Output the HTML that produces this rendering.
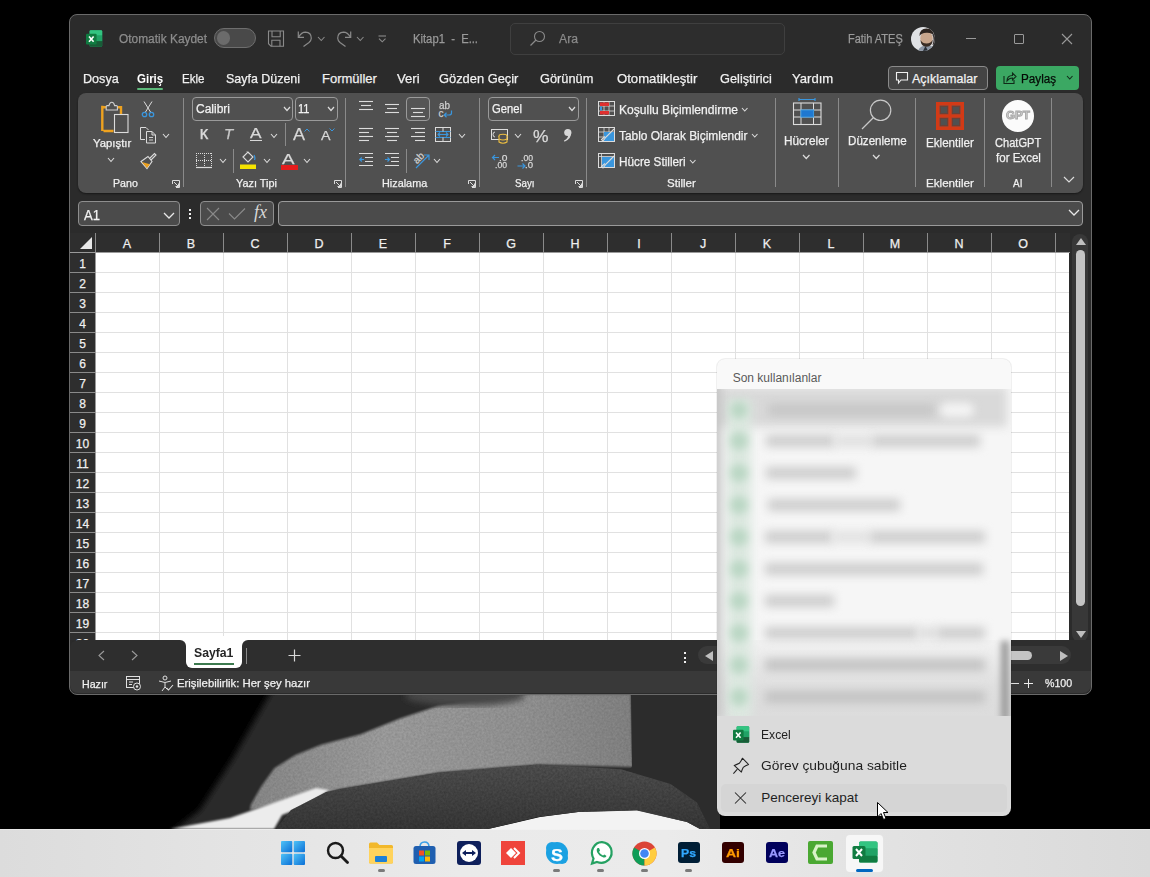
<!DOCTYPE html>
<html><head><meta charset="utf-8"><style>
html,body{margin:0;padding:0;}
body{width:1150px;height:877px;overflow:hidden;position:relative;background:#000;font-family:"Liberation Sans",sans-serif;}
.t{position:absolute;white-space:pre;transform-origin:0 0;-webkit-text-stroke:0.25px currentColor;}
.r{position:absolute;}
.s{position:absolute;overflow:visible;}
</style></head><body>
<svg class="s" style="left:0px;top:694px;" width="720" height="135" viewBox="0 0 720 135">
<defs>
 <linearGradient id="skin" x1="0" y1="0" x2="1" y2="0">
  <stop offset="0" stop-color="#909090"/><stop offset="0.35" stop-color="#a6a6a6"/><stop offset="0.7" stop-color="#9c9c9c"/><stop offset="1" stop-color="#8a8a8a"/>
 </linearGradient>
 <linearGradient id="collar" x1="0" y1="0" x2="0" y2="1">
  <stop offset="0" stop-color="#585858"/><stop offset="1" stop-color="#3e3e3e"/>
 </linearGradient>
 <filter id="bl1"><feGaussianBlur stdDeviation="1"/></filter>
 <filter id="bl3"><feGaussianBlur stdDeviation="3"/></filter>
 <filter id="bl8" x="-20%" y="-50%" width="140%" height="200%"><feGaussianBlur stdDeviation="8"/></filter>
 <filter id="noise" x="0" y="0" width="100%" height="100%">
  <feTurbulence type="fractalNoise" baseFrequency="0.45" numOctaves="2" seed="5"/>
  <feColorMatrix type="matrix" values="0 0 0 0 0  0 0 0 0 0  0 0 0 0 0  0 0 0 0.5 0"/>
  <feComposite in2="SourceGraphic" operator="in"/>
 </filter>
</defs>
<rect x="0" y="0" width="720" height="140" fill="#000"/>
<!-- neck shadow gray -->
<polygon points="272.0,-4.0 640.0,-4.0 640.0,106.0 300.0,138.0 172.0,138.0 200.0,116.0 232.0,66.0" fill="#2a2a2a" filter="url(#bl3)"/>
<!-- skin -->
<path id="skinp" d="M530.0 0.0 L631.0 0.0 L633.0 73.0 L540.0 70.4 L439.0 78.6 L340.0 95.0 L300.0 106.0 L250.0 116.0 L250.9 110.8 L261.3 92.5 L274.4 74.3 L295.2 61.2 L321.3 50.8 L360.4 40.4 L399.6 24.7 L438.7 11.7 L500.0 3.0 Z" fill="url(#skin)" filter="url(#bl1)"/>
<path d="M530.0 0.0 L631.0 0.0 L633.0 73.0 L540.0 70.4 L439.0 78.6 L340.0 95.0 L300.0 106.0 L250.0 116.0 L250.9 110.8 L261.3 92.5 L274.4 74.3 L295.2 61.2 L321.3 50.8 L360.4 40.4 L399.6 24.7 L438.7 11.7 L500.0 3.0 Z" fill="#fff" filter="url(#noise)" opacity="0.35"/>
<ellipse cx="465" cy="2" rx="60" ry="10" fill="#474747" filter="url(#bl3)"/>
<!-- right neck shadow -->
<polygon points="631.0,0.0 720.0,0.0 720.0,136.0 560.0,136.0 600.0,96.0 632.0,73.0" fill="#2c2c2c"/>
<!-- white shirt left -->
<polygon points="170.0,135.0 230.0,124.0 282.0,106.0 316.0,94.0 329.0,96.0 308.0,111.0 282.0,121.0 274.0,135.0" fill="#ececec" filter="url(#bl1)"/>
<!-- white shirt right -->
<polygon points="488.0,135.0 540.0,123.0 578.0,118.0 637.0,116.0 687.0,128.0 700.0,135.0" fill="#f3f3f3"/>
<!-- collar -->
<polygon id="col" points="276.0,135.0 291.0,116.0 326.0,98.0 340.0,95.0 439.0,78.6 538.0,70.4 621.0,75.3 670.5,90.0 697.0,108.4 710.0,135.0 700.0,135.0 687.0,128.0 637.0,116.6 578.0,118.0 538.0,123.0 488.0,135.0" fill="url(#collar)"/>
<polygon points="276.0,135.0 291.0,116.0 326.0,98.0 340.0,95.0 439.0,78.6 538.0,70.4 621.0,75.3 670.5,90.0 697.0,108.4 710.0,135.0 700.0,135.0 687.0,128.0 637.0,116.6 578.0,118.0 538.0,123.0 488.0,135.0" fill="#000" filter="url(#noise)" opacity="0.6"/>
</svg>
<div class="r" style="left:69px;top:14px;width:1021px;height:679px;background:#2b2b2b;border:1px solid #6a6a6a;border-radius:8px;"></div>
<svg class="s" style="left:85.6px;top:30.2px;" width="17" height="17" viewBox="0 0 17 17">
<rect x="3.6" y="0.2" width="12.6" height="16.5" rx="1.2" fill="#21a366"/>
<path d="M3.6 1.4 Q3.6 0.2 4.8 0.2 H15 Q16.2 0.2 16.2 1.4 V5.6 H3.6 Z" fill="#33c481"/>
<path d="M3.6 11.1 H16.2 V15.5 Q16.2 16.7 15 16.7 H4.8 Q3.6 16.7 3.6 15.5 Z" fill="#185c37"/>
<rect x="3.6" y="5.6" width="12.6" height="5.5" fill="#21a366"/>
<rect x="0" y="3.8" width="10.6" height="10.6" rx="1" fill="#107c41"/>
<path d="M3 6.5 L7.6 11.7 M7.6 6.5 L3 11.7" stroke="#fff" stroke-width="1.6"/>
</svg>
<div class="t" style="left:118.70px;top:32.62px;font-size:12.5px;line-height:12.5px;color:#8d8d8d;transform:scaleX(0.9524);">Otomatik Kaydet</div>
<div class="r" style="left:214px;top:28px;width:40px;height:18px;border:1px solid #6e6e6e;border-radius:10px;background:#494949;"></div>
<div class="r" style="left:216.7px;top:31px;width:13.6px;height:13.6px;border-radius:50%;background:#6b6b6b;"></div>
<svg class="s" style="left:268px;top:30px;" width="17" height="17" viewBox="0 0 17 17"><path d="M0.5 1 H15.5 V16.2 H3 L0.5 13.7 Z" fill="none" stroke="#8a8a8a" stroke-width="1.1"/><path d="M4 1 V6.8 H12.2 V1 M3.8 16.2 V10.2 H12 V16.2" fill="none" stroke="#8a8a8a" stroke-width="1.1"/></svg>
<svg class="s" style="left:297px;top:30px;" width="16" height="18" viewBox="0 0 16 18"><path d="M1.3 1.5 V7.3 H7" fill="none" stroke="#8a8a8a" stroke-width="1.2"/><path d="M1.5 7.2 Q4.5 2.2 8.5 2.2 Q14.3 2.6 14.3 8.2 Q14.2 10.5 12 12.5 L6.5 16.5" fill="none" stroke="#8a8a8a" stroke-width="1.2"/></svg>
<svg class="s" style="left:317px;top:36px;" width="8.5" height="5.5" viewBox="0 0 8.5 5.5"><path d="M1 1 L4.25 4.5 L7.5 1" fill="none" stroke="#8a8a8a" stroke-width="1.1"/></svg>
<svg class="s" style="left:336px;top:30px;" width="16" height="18" viewBox="0 0 16 18"><path d="M14.7 1.5 V7.3 H9" fill="none" stroke="#8a8a8a" stroke-width="1.2"/><path d="M14.5 7.2 Q11.5 2.2 7.5 2.2 Q1.7 2.6 1.7 8.2 Q1.8 10.5 4 12.5 L9.5 16.5" fill="none" stroke="#8a8a8a" stroke-width="1.2"/></svg>
<svg class="s" style="left:356.3px;top:36px;" width="8.5" height="5.5" viewBox="0 0 8.5 5.5"><path d="M1 1 L4.25 4.5 L7.5 1" fill="none" stroke="#8a8a8a" stroke-width="1.1"/></svg>
<svg class="s" style="left:378px;top:35px;" width="9" height="8" viewBox="0 0 9 8"><path d="M0.5 1 H8" stroke="#8a8a8a" stroke-width="1.1"/><path d="M1 3.6 L4.25 6.8 L7.5 3.6" fill="none" stroke="#8a8a8a" stroke-width="1.1"/></svg>
<div class="t" style="left:412.70px;top:33.42px;font-size:12.5px;line-height:12.5px;color:#9a9a9a;transform:scaleX(0.8996);">Kitap1  -  E...</div>
<div class="r" style="left:510px;top:23px;width:273px;height:30px;border:1px solid #3f3f3f;border-radius:5px;background:#2d2d2d;"></div>
<svg class="s" style="left:529px;top:30px;" width="17" height="17" viewBox="0 0 17 17"><circle cx="10.5" cy="6.5" r="5" fill="none" stroke="#8a8a8a" stroke-width="1.1"/><path d="M7 10 L1.5 15.5" stroke="#8a8a8a" stroke-width="1.2"/></svg>
<div class="t" style="left:559.30px;top:33.12px;font-size:12.5px;line-height:12.5px;color:#8a8a8a;transform:scaleX(0.9767);">Ara</div>
<div class="t" style="left:847.60px;top:33.42px;font-size:12.5px;line-height:12.5px;color:#9a9a9a;transform:scaleX(0.8781);">Fatih ATEŞ</div>
<svg class="s" style="left:911px;top:27px;" width="24" height="24" viewBox="0 0 24 24"><defs><clipPath id="av"><circle cx="12" cy="12" r="12"/></clipPath></defs>
<g clip-path="url(#av)"><rect width="24" height="24" fill="#dfe1e4"/>
<path d="M7 24 Q9 18.5 15 18.5 Q22 18.5 24 21 V24 Z" fill="#8c96a4"/>
<path d="M12 24 L14.5 19 L17 24 Z" fill="#2a3038"/>
<ellipse cx="15.5" cy="11.5" rx="6.2" ry="7.5" fill="#c9a68c"/>
<path d="M8.5 9 Q8.5 1.5 15.5 1.5 Q23 1.5 23 9.5 Q21.5 5.5 15.5 5.8 Q10 6 8.5 9 Z" fill="#2e2520"/>
<path d="M9.5 13 Q9.8 19.5 15.5 19.8 Q21.5 19.5 21.8 12.5 Q20 16.5 15.5 16.5 Q11.5 16.5 9.5 13 Z" fill="#3a2d25"/>
<path d="M21.5 8 Q23.5 12 21.5 18 L24 18 V6 Z" fill="#3a3535"/>
</g></svg>
<div class="r" style="left:966px;top:38px;width:10px;height:1px;background:#9a9a9a;"></div>
<div class="r" style="left:1014px;top:34px;width:8px;height:8px;border:1px solid #9a9a9a;border-radius:1px;"></div>
<svg class="s" style="left:1061px;top:33px;" width="12" height="12" viewBox="0 0 12 12"><path d="M1 1 L11 11 M11 1 L1 11" stroke="#9a9a9a" stroke-width="1.1"/></svg>
<div class="t" style="left:83.20px;top:71.90px;font-size:13px;line-height:13px;color:#f0f0f0;transform:scaleX(0.9688);">Dosya</div>
<div class="t" style="left:182.40px;top:71.90px;font-size:13px;line-height:13px;color:#f0f0f0;transform:scaleX(0.8857);">Ekle</div>
<div class="t" style="left:226.00px;top:71.90px;font-size:13px;line-height:13px;color:#f0f0f0;transform:scaleX(0.9570);">Sayfa Düzeni</div>
<div class="t" style="left:322.00px;top:71.90px;font-size:13px;line-height:13px;color:#f0f0f0;">Formüller</div>
<div class="t" style="left:397.00px;top:71.90px;font-size:13px;line-height:13px;color:#f0f0f0;transform:scaleX(1.0088);">Veri</div>
<div class="t" style="left:439.00px;top:71.90px;font-size:13px;line-height:13px;color:#f0f0f0;transform:scaleX(0.9900);">Gözden Geçir</div>
<div class="t" style="left:540.30px;top:71.90px;font-size:13px;line-height:13px;color:#f0f0f0;transform:scaleX(0.9835);">Görünüm</div>
<div class="t" style="left:617.40px;top:71.90px;font-size:13px;line-height:13px;color:#f0f0f0;transform:scaleX(1.0106);">Otomatikleştir</div>
<div class="t" style="left:720.40px;top:71.90px;font-size:13px;line-height:13px;color:#f0f0f0;transform:scaleX(0.9825);">Geliştirici</div>
<div class="t" style="left:791.60px;top:71.90px;font-size:13px;line-height:13px;color:#f0f0f0;transform:scaleX(1.0064);">Yardım</div>
<div class="t" style="left:137.00px;top:71.90px;font-size:13px;line-height:13px;color:#ffffff;font-weight:700;transform:scaleX(0.8844);-webkit-text-stroke:0;">Giriş</div>
<div class="r" style="left:137px;top:88px;width:26px;height:2px;border-radius:1px;background:#5cb97a;"></div>
<div class="r" style="left:888px;top:66px;width:98px;height:22px;border:1px solid #8a8a8a;border-radius:4px;background:#444;"></div>
<svg class="s" style="left:895px;top:71px;" width="14" height="14" viewBox="0 0 14 14"><path d="M1.5 1.5 H12.5 V9 H6 L3.5 12 V9 H1.5 Z" fill="none" stroke="#f0f0f0" stroke-width="1.1"/></svg>
<div class="t" style="left:912.00px;top:72.62px;font-size:12.5px;line-height:12.5px;color:#f2f2f2;">Açıklamalar</div>
<div class="r" style="left:996px;top:66px;width:83px;height:24px;border-radius:4px;background:#3ba863;"></div>
<svg class="s" style="left:1002px;top:70px;" width="15" height="15" viewBox="0 0 15 15"><path d="M2 6 V13.5 H12 V10" fill="none" stroke="#102a18" stroke-width="1.1"/><path d="M5 11 Q5 5.5 10.5 5.5 V3 L14 6.5 L10.5 10 V8 Q7 8 5 11 Z" fill="none" stroke="#102a18" stroke-width="1.1"/></svg>
<div class="t" style="left:1020.60px;top:72.62px;font-size:12.5px;line-height:12.5px;color:#050a06;transform:scaleX(0.9355);">Paylaş</div>
<svg class="s" style="left:1066px;top:75px;" width="7.5" height="5" viewBox="0 0 7.5 5"><path d="M1 1 L3.75 4 L6.5 1" fill="none" stroke="#102a18" stroke-width="1.1"/></svg>
<div class="r" style="left:78px;top:93px;width:1005px;height:100px;border-radius:8px;background:#505050;box-shadow:0 1px 2px rgba(0,0,0,0.45);"></div>
<div class="r" style="left:183px;top:98px;width:1px;height:89px;background:#8a8a8a;"></div>
<div class="r" style="left:345px;top:98px;width:1px;height:89px;background:#8a8a8a;"></div>
<div class="r" style="left:479px;top:98px;width:1px;height:89px;background:#8a8a8a;"></div>
<div class="r" style="left:586px;top:98px;width:1px;height:89px;background:#8a8a8a;"></div>
<div class="r" style="left:775px;top:98px;width:1px;height:89px;background:#8a8a8a;"></div>
<div class="r" style="left:838px;top:98px;width:1px;height:89px;background:#8a8a8a;"></div>
<div class="r" style="left:915px;top:98px;width:1px;height:89px;background:#8a8a8a;"></div>
<div class="r" style="left:984px;top:98px;width:1px;height:89px;background:#8a8a8a;"></div>
<div class="r" style="left:1051px;top:98px;width:1px;height:89px;background:#8a8a8a;"></div>
<div class="t" style="left:112.50px;top:177.69px;font-size:11px;line-height:11px;color:#f0f0f0;transform:scaleX(0.9653);">Pano</div>
<div class="t" style="left:236.00px;top:177.69px;font-size:11px;line-height:11px;color:#f0f0f0;transform:scaleX(0.9887);">Yazı Tipi</div>
<div class="t" style="left:382.40px;top:177.69px;font-size:11px;line-height:11px;color:#f0f0f0;transform:scaleX(0.9858);">Hizalama</div>
<div class="t" style="left:515.00px;top:177.69px;font-size:11px;line-height:11px;color:#f0f0f0;transform:scaleX(0.8859);">Sayı</div>
<div class="t" style="left:667.20px;top:177.69px;font-size:11px;line-height:11px;color:#f0f0f0;transform:scaleX(1.0470);">Stiller</div>
<div class="t" style="left:926.40px;top:177.69px;font-size:11px;line-height:11px;color:#f0f0f0;transform:scaleX(1.0565);">Eklentiler</div>
<div class="t" style="left:1013.00px;top:177.69px;font-size:11px;line-height:11px;color:#f0f0f0;transform:scaleX(0.9044);">AI</div>
<svg class="s" style="left:172px;top:180px;" width="8" height="8" viewBox="0 0 8 8"><path d="M0.5 4 V0.5 H7.5 V7.5 H4" fill="none" stroke="#dcdcdc" stroke-width="1"/><path d="M2 2 L6.5 6.5 M6.5 3.5 V6.5 H3.5" fill="none" stroke="#dcdcdc" stroke-width="1"/></svg>
<svg class="s" style="left:334px;top:180px;" width="8" height="8" viewBox="0 0 8 8"><path d="M0.5 4 V0.5 H7.5 V7.5 H4" fill="none" stroke="#dcdcdc" stroke-width="1"/><path d="M2 2 L6.5 6.5 M6.5 3.5 V6.5 H3.5" fill="none" stroke="#dcdcdc" stroke-width="1"/></svg>
<svg class="s" style="left:468px;top:180px;" width="8" height="8" viewBox="0 0 8 8"><path d="M0.5 4 V0.5 H7.5 V7.5 H4" fill="none" stroke="#dcdcdc" stroke-width="1"/><path d="M2 2 L6.5 6.5 M6.5 3.5 V6.5 H3.5" fill="none" stroke="#dcdcdc" stroke-width="1"/></svg>
<svg class="s" style="left:575px;top:180px;" width="8" height="8" viewBox="0 0 8 8"><path d="M0.5 4 V0.5 H7.5 V7.5 H4" fill="none" stroke="#dcdcdc" stroke-width="1"/><path d="M2 2 L6.5 6.5 M6.5 3.5 V6.5 H3.5" fill="none" stroke="#dcdcdc" stroke-width="1"/></svg>
<svg class="s" style="left:100px;top:101px;" width="30" height="33" viewBox="0 0 30 33">
<path d="M3.5 30 H13.5 M2.3 4.8 V30 M2.3 6.2 H6.5 M17 6.2 H21 V13" fill="none" stroke="#eea21f" stroke-width="2.4"/>
<path d="M6.2 9 V5.6 Q6.2 4.6 7.2 4.6 H9 Q9.6 1.2 11.8 1.2 Q14 1.2 14.6 4.6 H16.4 Q17.4 4.6 17.4 5.6 V9 Z" fill="#505050" stroke="#cfcfcf" stroke-width="1.1"/>
<rect x="14.5" y="13.5" width="13.5" height="18" fill="#505050" stroke="#dcdcdc" stroke-width="1.1"/>
</svg>
<div class="t" style="left:92.70px;top:138.49px;font-size:11px;line-height:11px;color:#f0f0f0;transform:scaleX(1.0327);">Yapıştır</div>
<svg class="s" style="left:107px;top:157px;" width="8" height="5.5" viewBox="0 0 8 5.5"><path d="M1 1 L4.0 4.5 L7 1" fill="none" stroke="#dcdcdc" stroke-width="1.1"/></svg>
<svg class="s" style="left:141px;top:101px;" width="14" height="17" viewBox="0 0 14 17"><path d="M3 0.5 L9.5 11 M11 0.5 L4.5 11" stroke="#dcdcdc" stroke-width="1"/><circle cx="3.5" cy="13.5" r="2.2" fill="none" stroke="#3a96dd" stroke-width="1.3"/><circle cx="10.5" cy="13.5" r="2.2" fill="none" stroke="#3a96dd" stroke-width="1.3"/></svg>
<svg class="s" style="left:140px;top:127px;" width="17" height="17" viewBox="0 0 17 17"><path d="M5 12.5 H0.5 V0.5 H6 L8.5 3" fill="none" stroke="#dcdcdc" stroke-width="1"/><path d="M6.5 4.5 H12 L15.5 8 V16 H6.5 Z M12 4.5 V8 H15.5" fill="none" stroke="#dcdcdc" stroke-width="1"/><path d="M9 10.5 H13 M9 13 H13" stroke="#dcdcdc" stroke-width="0.9"/></svg>
<svg class="s" style="left:162px;top:133px;" width="8" height="5.5" viewBox="0 0 8 5.5"><path d="M1 1 L4.0 4.5 L7 1" fill="none" stroke="#dcdcdc" stroke-width="1.1"/></svg>
<svg class="s" style="left:139px;top:152px;" width="18" height="18" viewBox="0 0 18 18"><path d="M2 9.5 L9 4.5 L13 9.5 L8 16.5 Z" fill="none" stroke="#dcdcdc" stroke-width="1.1"/><path d="M2.8 10 L8 16 L10.8 12.2 Z" fill="#eea21f"/><path d="M10.5 6.5 L15.5 1.5 L17 3 L12 8" fill="none" stroke="#dcdcdc" stroke-width="1.1"/></svg>
<div class="r" style="left:192px;top:97px;width:99px;height:22px;border:1px solid #9a9a9a;border-radius:4px;"></div>
<div class="r" style="left:295px;top:97px;width:41px;height:22px;border:1px solid #9a9a9a;border-radius:4px;"></div>
<div class="t" style="left:195.50px;top:103.22px;font-size:12.5px;line-height:12.5px;color:#f2f2f2;transform:scaleX(0.9597);">Calibri</div>
<div class="t" style="left:298.30px;top:103.22px;font-size:12.5px;line-height:12.5px;color:#f2f2f2;transform:scaleX(0.8862);">11</div>
<svg class="s" style="left:282.5px;top:106px;" width="8" height="5.5" viewBox="0 0 8 5.5"><path d="M1 1 L4.0 4.5 L7 1" fill="none" stroke="#dcdcdc" stroke-width="1.2"/></svg>
<svg class="s" style="left:327px;top:106px;" width="8" height="5.5" viewBox="0 0 8 5.5"><path d="M1 1 L4.0 4.5 L7 1" fill="none" stroke="#dcdcdc" stroke-width="1.2"/></svg>
<div class="t" style="left:199.50px;top:126.95px;font-size:14px;line-height:14px;color:#d8d8d8;font-weight:700;transform:scaleX(0.8407);">K</div>
<div class="t" style="left:224.30px;top:126.95px;font-size:14px;line-height:14px;color:#c8c8c8;transform:scaleX(1.0758);font-style:italic;">T</div>
<div class="t" style="left:250.30px;top:126.15px;font-size:14px;line-height:14px;color:#d8d8d8;transform:scaleX(1.2315);">A</div>
<div class="r" style="left:250px;top:140px;width:12px;height:1px;background:#d8d8d8;"></div>
<svg class="s" style="left:270px;top:133px;" width="8" height="5.5" viewBox="0 0 8 5.5"><path d="M1 1 L4.0 4.5 L7 1" fill="none" stroke="#dcdcdc" stroke-width="1.1"/></svg>
<div class="r" style="left:285px;top:123px;width:1px;height:23px;background:#8a8a8a;"></div>
<div class="t" style="left:293.00px;top:125.61px;font-size:17px;line-height:17px;color:#d8d8d8;transform:scaleX(1.0582);">A</div>
<svg class="s" style="left:304px;top:128px;" width="6" height="4" viewBox="0 0 6 4"><path d="M0.5 3.5 L3 1 L5.5 3.5" fill="none" stroke="#3a96dd" stroke-width="1"/></svg>
<div class="t" style="left:321.00px;top:129.00px;font-size:13px;line-height:13px;color:#d8d8d8;transform:scaleX(1.0956);">A</div>
<svg class="s" style="left:329px;top:128px;" width="6" height="4" viewBox="0 0 6 4"><path d="M0.5 0.5 L3 3 L5.5 0.5" fill="none" stroke="#3a96dd" stroke-width="1"/></svg>
<svg class="s" style="left:196px;top:153px;" width="16" height="16" viewBox="0 0 16 16"><path d="M0.5 0 V14 M15.5 0 V14 M8.5 0 V14 M0 0.5 H16 M0 7.5 H16" fill="none" stroke="#dcdcdc" stroke-width="1" stroke-dasharray="1 1"/><path d="M0 14.5 H16" stroke="#dcdcdc" stroke-width="1.2"/></svg>
<svg class="s" style="left:218.6px;top:158px;" width="8" height="5.5" viewBox="0 0 8 5.5"><path d="M1 1 L4.0 4.5 L7 1" fill="none" stroke="#dcdcdc" stroke-width="1.1"/></svg>
<div class="r" style="left:233px;top:149px;width:1px;height:24px;background:#8a8a8a;"></div>
<svg class="s" style="left:240px;top:150px;" width="17" height="20" viewBox="0 0 17 20"><path d="M3 7 L8 2 L13 7 L8 12 Z" fill="none" stroke="#dcdcdc" stroke-width="1.1"/><path d="M7 1.5 L9 3.5" stroke="#dcdcdc" stroke-width="1"/><path d="M14 5 Q15.5 7.5 14.5 10" fill="none" stroke="#3a96dd" stroke-width="1.3"/><rect x="0" y="14.5" width="16" height="4.5" fill="#f5e400"/></svg>
<svg class="s" style="left:262.5px;top:158px;" width="8" height="5.5" viewBox="0 0 8 5.5"><path d="M1 1 L4.0 4.5 L7 1" fill="none" stroke="#dcdcdc" stroke-width="1.1"/></svg>
<div class="t" style="left:282.00px;top:152.15px;font-size:14px;line-height:14px;color:#d8d8d8;transform:scaleX(1.3386);">A</div>
<div class="r" style="left:280.5px;top:165px;width:17px;height:4.5px;background:#e51c1c;"></div>
<svg class="s" style="left:303px;top:158px;" width="8" height="5.5" viewBox="0 0 8 5.5"><path d="M1 1 L4.0 4.5 L7 1" fill="none" stroke="#dcdcdc" stroke-width="1.1"/></svg>
<svg class="s" style="left:359px;top:100px;" width="14" height="16" viewBox="0 0 14 16"><path d="M0 1.5 H14" stroke="#dcdcdc" stroke-width="1.1"/><path d="M2 5.5 H12" stroke="#dcdcdc" stroke-width="1.1"/><path d="M0 9.5 H14" stroke="#dcdcdc" stroke-width="1.1"/></svg>
<svg class="s" style="left:385px;top:103px;" width="14" height="16" viewBox="0 0 14 16"><path d="M0 1.5 H14" stroke="#dcdcdc" stroke-width="1.1"/><path d="M2 5.5 H12" stroke="#dcdcdc" stroke-width="1.1"/><path d="M0 9.5 H14" stroke="#dcdcdc" stroke-width="1.1"/></svg>
<div class="r" style="left:406px;top:97px;width:22px;height:22px;border:1px solid #9a9a9a;border-radius:4px;background:#555;"></div>
<svg class="s" style="left:411px;top:107px;" width="14" height="16" viewBox="0 0 14 16"><path d="M0 1.5 H14" stroke="#dcdcdc" stroke-width="1.1"/><path d="M2 5.5 H12" stroke="#dcdcdc" stroke-width="1.1"/><path d="M0 9.5 H14" stroke="#dcdcdc" stroke-width="1.1"/></svg>
<div class="t" style="left:438.50px;top:100.53px;font-size:10px;line-height:10px;color:#cfcfcf;transform:scaleX(0.9889);">ab</div>
<div class="t" style="left:438.50px;top:108.53px;font-size:10px;line-height:10px;color:#cfcfcf;">c</div>
<svg class="s" style="left:443px;top:110px;" width="10" height="8" viewBox="0 0 10 8"><path d="M8.5 0.5 V3 Q8.5 5 6 5 H1.5 M3.5 2.8 L1.2 5 L3.5 7.2" fill="none" stroke="#3a96dd" stroke-width="1.2"/></svg>
<svg class="s" style="left:359px;top:127px;" width="14" height="16" viewBox="0 0 14 16"><path d="M0 1.5 H14" stroke="#dcdcdc" stroke-width="1.1"/><path d="M0 5.5 H10" stroke="#dcdcdc" stroke-width="1.1"/><path d="M0 9.5 H14" stroke="#dcdcdc" stroke-width="1.1"/><path d="M0 13.5 H10" stroke="#dcdcdc" stroke-width="1.1"/></svg>
<svg class="s" style="left:385px;top:127px;" width="14" height="16" viewBox="0 0 14 16"><path d="M0 1.5 H14" stroke="#dcdcdc" stroke-width="1.1"/><path d="M2 5.5 H12" stroke="#dcdcdc" stroke-width="1.1"/><path d="M0 9.5 H14" stroke="#dcdcdc" stroke-width="1.1"/><path d="M2 13.5 H12" stroke="#dcdcdc" stroke-width="1.1"/></svg>
<svg class="s" style="left:411px;top:127px;" width="14" height="16" viewBox="0 0 14 16"><path d="M0 1.5 H14" stroke="#dcdcdc" stroke-width="1.1"/><path d="M4 5.5 H14" stroke="#dcdcdc" stroke-width="1.1"/><path d="M0 9.5 H14" stroke="#dcdcdc" stroke-width="1.1"/><path d="M4 13.5 H14" stroke="#dcdcdc" stroke-width="1.1"/></svg>
<svg class="s" style="left:435px;top:127px;" width="17" height="16" viewBox="0 0 17 16"><rect x="0.5" y="0.5" width="15" height="14" fill="none" stroke="#dcdcdc" stroke-width="1"/><path d="M0.5 4.5 H15.5 M0.5 10.5 H15.5" stroke="#3a96dd" stroke-width="1.2"/><path d="M8 0.5 V4.5 M8 10.5 V14.5" stroke="#dcdcdc" stroke-width="1"/><path d="M3 7.5 H13 M5 5.5 L3 7.5 L5 9.5 M11 5.5 L13 7.5 L11 9.5" fill="none" stroke="#3a96dd" stroke-width="1.1"/></svg>
<svg class="s" style="left:458px;top:133px;" width="8" height="5.5" viewBox="0 0 8 5.5"><path d="M1 1 L4.0 4.5 L7 1" fill="none" stroke="#dcdcdc" stroke-width="1.1"/></svg>
<svg class="s" style="left:359px;top:153px;" width="14" height="14" viewBox="0 0 14 14"><path d="M0 0.5 H14 M6 4.5 H14 M6 8.5 H14 M0 12.5 H14" stroke="#dcdcdc" stroke-width="1.1"/><path d="M5 6.5 H0.8 M2.8 4.5 L0.8 6.5 L2.8 8.5" fill="none" stroke="#3a96dd" stroke-width="1.2"/></svg>
<svg class="s" style="left:385px;top:153px;" width="14" height="14" viewBox="0 0 14 14"><path d="M0 0.5 H14 M6 4.5 H14 M6 8.5 H14 M0 12.5 H14" stroke="#dcdcdc" stroke-width="1.1"/><path d="M0 6.5 H4.5 M2.5 4.5 L4.5 6.5 L2.5 8.5" fill="none" stroke="#3a96dd" stroke-width="1.2"/></svg>
<div class="r" style="left:406px;top:149px;width:1px;height:24px;background:#8a8a8a;"></div>
<div class="t" style="left:412.00px;top:154.53px;font-size:10px;line-height:10px;color:#cfcfcf;transform:scaleX(0.8990);transform:rotate(-45deg) translate(-3px,2px);">ab</div>
<svg class="s" style="left:415px;top:154px;" width="15" height="15" viewBox="0 0 15 15"><path d="M1 14 L14 1 M9 1 H14 V6" fill="none" stroke="#3a96dd" stroke-width="1.2"/></svg>
<svg class="s" style="left:433px;top:158px;" width="8" height="5.5" viewBox="0 0 8 5.5"><path d="M1 1 L4.0 4.5 L7 1" fill="none" stroke="#dcdcdc" stroke-width="1.1"/></svg>
<div class="r" style="left:488px;top:97px;width:89px;height:22px;border:1px solid #9a9a9a;border-radius:4px;"></div>
<div class="t" style="left:492.00px;top:103.22px;font-size:12.5px;line-height:12.5px;color:#f2f2f2;transform:scaleX(0.8994);">Genel</div>
<svg class="s" style="left:568px;top:106px;" width="8" height="5.5" viewBox="0 0 8 5.5"><path d="M1 1 L4.0 4.5 L7 1" fill="none" stroke="#dcdcdc" stroke-width="1.2"/></svg>
<svg class="s" style="left:491px;top:129px;" width="18" height="16" viewBox="0 0 18 16"><rect x="0.5" y="0.5" width="16" height="10" fill="none" stroke="#dcdcdc" stroke-width="1"/><path d="M4 3 Q2 3 2 5.5 Q2 8 4 8" fill="none" stroke="#dcdcdc" stroke-width="1"/><ellipse cx="12" cy="7" rx="4" ry="1.7" fill="#505050" stroke="#f0c040" stroke-width="1.1"/><path d="M8 7 V13 Q12 15.5 16 13 V7" fill="#505050" stroke="#f0c040" stroke-width="1.1"/><path d="M8 10 Q12 12 16 10" fill="none" stroke="#f0c040" stroke-width="1.1"/></svg>
<svg class="s" style="left:514px;top:133px;" width="8" height="5.5" viewBox="0 0 8 5.5"><path d="M1 1 L4.0 4.5 L7 1" fill="none" stroke="#dcdcdc" stroke-width="1.1"/></svg>
<div class="t" style="left:532.50px;top:127.61px;font-size:17px;line-height:17px;color:#d8d8d8;transform:scaleX(1.0254);">%</div>
<svg class="s" style="left:563px;top:128px;" width="10" height="15" viewBox="0 0 10 15"><circle cx="4.8" cy="4.5" r="3.6" fill="#d8d8d8"/><path d="M8.2 4.5 Q8.6 10.5 1.5 13.8 L1 12.6 Q5 10.5 5.2 7 Z" fill="#d8d8d8"/></svg>
<svg class="s" style="left:491px;top:153px;" width="18" height="16" viewBox="0 0 18 16"><path d="M8 4.5 H1.5 M4 2 L1.5 4.5 L4 7" fill="none" stroke="#3a96dd" stroke-width="1.2"/></svg>
<div class="t" style="left:499.00px;top:153.46px;font-size:9.5px;line-height:9.5px;color:#d8d8d8;transform:scaleX(1.0728);">.0</div>
<div class="t" style="left:495.00px;top:159.96px;font-size:9.5px;line-height:9.5px;color:#d8d8d8;transform:scaleX(0.9086);">.00</div>
<div class="t" style="left:521.00px;top:153.46px;font-size:9.5px;line-height:9.5px;color:#d8d8d8;transform:scaleX(0.9086);">.00</div>
<div class="t" style="left:525.00px;top:159.96px;font-size:9.5px;line-height:9.5px;color:#d8d8d8;transform:scaleX(1.0097);">.0</div>
<svg class="s" style="left:517px;top:163px;" width="10" height="6" viewBox="0 0 10 6"><path d="M0.5 3 H8 M5.5 0.5 L8 3 L5.5 5.5" fill="none" stroke="#3a96dd" stroke-width="1.2"/></svg>
<svg class="s" style="left:598px;top:101px;" width="18" height="16" viewBox="0 0 18 16"><rect x="0.5" y="0.5" width="16" height="14" fill="none" stroke="#dcdcdc" stroke-width="1"/>
<path d="M0.5 5 H16.5 M0.5 10 H16.5 M6 0.5 V14.5 M11 0.5 V14.5" stroke="#dcdcdc" stroke-width="0.8"/>
<rect x="2" y="1.5" width="9" height="3.5" fill="#e03030"/><rect x="2" y="10" width="9" height="3.5" fill="#e03030"/><rect x="2" y="5.5" width="2" height="4" fill="#3a96dd"/></svg>
<div class="t" style="left:619.40px;top:104.32px;font-size:12.5px;line-height:12.5px;color:#f2f2f2;transform:scaleX(0.9686);">Koşullu Biçimlendirme</div>
<svg class="s" style="left:741px;top:107px;" width="7.5" height="5" viewBox="0 0 7.5 5"><path d="M1 1 L3.75 4 L6.5 1" fill="none" stroke="#dcdcdc" stroke-width="1.1"/></svg>
<svg class="s" style="left:598px;top:127px;" width="18" height="16" viewBox="0 0 18 16"><rect x="0.5" y="0.5" width="16" height="14" fill="none" stroke="#dcdcdc" stroke-width="1"/>
<path d="M0.5 5 H16.5 M0.5 10 H16.5 M6 0.5 V14.5 M11 0.5 V14.5" stroke="#dcdcdc" stroke-width="0.8"/>
<rect x="6" y="5" width="10" height="9" fill="#3a96dd"/><path d="M16 2 L8 10 L5 14 L3.5 12.5 L7 9.5" fill="none" stroke="#dcdcdc" stroke-width="1.1"/></svg>
<div class="t" style="left:619.40px;top:129.72px;font-size:12.5px;line-height:12.5px;color:#f2f2f2;transform:scaleX(0.9527);">Tablo Olarak Biçimlendir</div>
<svg class="s" style="left:751px;top:133px;" width="7.5" height="5" viewBox="0 0 7.5 5"><path d="M1 1 L3.75 4 L6.5 1" fill="none" stroke="#dcdcdc" stroke-width="1.1"/></svg>
<svg class="s" style="left:598px;top:153px;" width="18" height="17" viewBox="0 0 18 17"><rect x="0.5" y="0.5" width="16" height="14" fill="none" stroke="#dcdcdc" stroke-width="1"/>
<path d="M0.5 3.5 H16.5 M3.5 0.5 V14.5" stroke="#dcdcdc" stroke-width="0.8"/>
<rect x="4" y="4" width="12" height="10" fill="#3a96dd"/><path d="M16 3 L8 11 L5 15 L3.5 13.5 L7 10.5" fill="none" stroke="#dcdcdc" stroke-width="1.1"/></svg>
<div class="t" style="left:619.40px;top:156.02px;font-size:12.5px;line-height:12.5px;color:#f2f2f2;transform:scaleX(0.9400);">Hücre Stilleri</div>
<svg class="s" style="left:689px;top:159px;" width="7.5" height="5" viewBox="0 0 7.5 5"><path d="M1 1 L3.75 4 L6.5 1" fill="none" stroke="#dcdcdc" stroke-width="1.1"/></svg>
<svg class="s" style="left:792px;top:98px;" width="31" height="28" viewBox="0 0 31 28"><path d="M7 1.5 H23 M7 0 V3 M23 0 V3" stroke="#3a96dd" stroke-width="1.2"/>
<rect x="1.5" y="5" width="27.5" height="21.5" fill="none" stroke="#dcdcdc" stroke-width="1.1"/>
<path d="M1.5 12 H29 M1.5 19 H29 M9 5 V26.5 M21.5 5 V26.5" stroke="#dcdcdc" stroke-width="1"/>
<rect x="9" y="12" width="12.5" height="7" fill="#1f78d1" stroke="#3a96dd" stroke-width="1.1"/></svg>
<div class="t" style="left:784.30px;top:135.04px;font-size:12px;line-height:12px;color:#f0f0f0;transform:scaleX(0.9857);">Hücreler</div>
<svg class="s" style="left:802px;top:154px;" width="8.5" height="5.5" viewBox="0 0 8.5 5.5"><path d="M1 1 L4.25 4.5 L7.5 1" fill="none" stroke="#dcdcdc" stroke-width="1.2"/></svg>
<svg class="s" style="left:860px;top:98px;" width="34" height="33" viewBox="0 0 34 33"><circle cx="20.6" cy="12.3" r="10.2" fill="none" stroke="#c8c8c8" stroke-width="1.2"/><path d="M13.5 19.5 L2 31" stroke="#c8c8c8" stroke-width="1.2"/></svg>
<div class="t" style="left:847.60px;top:135.04px;font-size:12px;line-height:12px;color:#f0f0f0;transform:scaleX(0.9671);">Düzenleme</div>
<svg class="s" style="left:872.4px;top:154px;" width="8.5" height="5.5" viewBox="0 0 8.5 5.5"><path d="M1 1 L4.25 4.5 L7.5 1" fill="none" stroke="#dcdcdc" stroke-width="1.2"/></svg>
<svg class="s" style="left:936px;top:102px;" width="28" height="28" viewBox="0 0 28 28"><rect x="1.8" y="1.8" width="24.4" height="24.4" fill="none" stroke="#d23a16" stroke-width="3.6"/><path d="M14 1.8 V26.2 M1.8 14 H26.2" stroke="#d23a16" stroke-width="3.4"/><path d="M4.5 4.5 H11.5 V11.5 H4.5 Z M16.5 4.5 H23.5 V11.5 H16.5 Z M4.5 16.5 H11.5 V23.5 H4.5 Z M16.5 16.5 H23.5 V23.5 H16.5 Z" fill="none" stroke="#7a3a2a" stroke-width="0.7"/></svg>
<div class="t" style="left:926.40px;top:136.84px;font-size:12px;line-height:12px;color:#f0f0f0;transform:scaleX(0.9685);">Eklentiler</div>
<div class="r" style="left:1002px;top:100px;width:32px;height:32px;border-radius:50%;background:#fbfbfb;"></div>
<div class="t" style="left:1006.00px;top:110.47px;font-size:11.5px;line-height:11.5px;color:#d0d0d0;font-weight:700;transform:scaleX(1.0152);-webkit-text-stroke:0.9px #a8a8a8;">GPT</div>
<div class="t" style="left:995.30px;top:136.84px;font-size:12px;line-height:12px;color:#f0f0f0;transform:scaleX(0.9237);">ChatGPT</div>
<div class="t" style="left:995.80px;top:152.14px;font-size:12px;line-height:12px;color:#f0f0f0;transform:scaleX(0.9618);">for Excel</div>
<svg class="s" style="left:1062.5px;top:176px;" width="12" height="7" viewBox="0 0 12 7"><path d="M1 1 L6.0 6 L11 1" fill="none" stroke="#dcdcdc" stroke-width="1.2"/></svg>
<div class="r" style="left:78px;top:201px;width:100px;height:23px;border:1px solid #8e8e8e;border-radius:4px;background:#4b4b4b;"></div>
<div class="t" style="left:84.40px;top:207.75px;font-size:14px;line-height:14px;color:#f2f2f2;transform:scaleX(0.9343);">A1</div>
<svg class="s" style="left:163px;top:211.8px;" width="12" height="7" viewBox="0 0 12 7"><path d="M1 1 L6.0 6 L11 1" fill="none" stroke="#e8e8e8" stroke-width="1.3"/></svg>
<div class="r" style="left:189px;top:209px;width:2px;height:2px;background:#f0f0f0;"></div>
<div class="r" style="left:189px;top:213px;width:2px;height:2px;background:#f0f0f0;"></div>
<div class="r" style="left:189px;top:217px;width:2px;height:2px;background:#f0f0f0;"></div>
<div class="r" style="left:200px;top:201px;width:72px;height:23px;border:1px solid #8e8e8e;border-radius:4px;background:#4b4b4b;"></div>
<svg class="s" style="left:206px;top:207px;" width="14" height="14" viewBox="0 0 14 14"><path d="M1 1 L13 13 M13 1 L1 13" stroke="#8a8a8a" stroke-width="1.1"/></svg>
<svg class="s" style="left:228px;top:207px;" width="18" height="13" viewBox="0 0 18 13"><path d="M1 6.5 L6.5 12 L17 1.5" fill="none" stroke="#8a8a8a" stroke-width="1.1"/></svg>
<div class="t" style="left:254px;top:202px;font-family:'Liberation Serif',serif;font-style:italic;font-size:18px;line-height:20px;color:#d8d8d8;letter-spacing:0px;-webkit-text-stroke:0;">fx</div>
<div class="r" style="left:278px;top:201px;width:803px;height:23px;border:1px solid #8e8e8e;border-radius:4px;background:#4b4b4b;border-color:#9a9a9a;"></div>
<svg class="s" style="left:1067.5px;top:209px;" width="12" height="7" viewBox="0 0 12 7"><path d="M1 1 L6.0 6 L11 1" fill="none" stroke="#e8e8e8" stroke-width="1.3"/></svg>
<div class="r" style="left:70px;top:233px;width:1000px;height:19px;background:#2e2e2e;"></div>
<svg class="s" style="left:80px;top:237px;" width="12" height="12" viewBox="0 0 12 12"><path d="M12 0 V12 H0 Z" fill="#e8e8e8"/></svg>
<div class="r" style="left:95px;top:233px;width:1px;height:19px;background:#8a8a8a;"></div>
<div class="t" style="left:122.83px;top:238.22px;font-size:12.5px;line-height:12.5px;color:#f0f0f0;">A</div>
<div class="r" style="left:159px;top:233px;width:1px;height:19px;background:#8a8a8a;"></div>
<div class="t" style="left:186.83px;top:238.22px;font-size:12.5px;line-height:12.5px;color:#f0f0f0;">B</div>
<div class="r" style="left:223px;top:233px;width:1px;height:19px;background:#8a8a8a;"></div>
<div class="t" style="left:250.49px;top:238.22px;font-size:12.5px;line-height:12.5px;color:#f0f0f0;">C</div>
<div class="r" style="left:287px;top:233px;width:1px;height:19px;background:#8a8a8a;"></div>
<div class="t" style="left:314.49px;top:238.22px;font-size:12.5px;line-height:12.5px;color:#f0f0f0;">D</div>
<div class="r" style="left:351px;top:233px;width:1px;height:19px;background:#8a8a8a;"></div>
<div class="t" style="left:378.83px;top:238.22px;font-size:12.5px;line-height:12.5px;color:#f0f0f0;">E</div>
<div class="r" style="left:415px;top:233px;width:1px;height:19px;background:#8a8a8a;"></div>
<div class="t" style="left:443.18px;top:238.22px;font-size:12.5px;line-height:12.5px;color:#f0f0f0;">F</div>
<div class="r" style="left:479px;top:233px;width:1px;height:19px;background:#8a8a8a;"></div>
<div class="t" style="left:506.14px;top:238.22px;font-size:12.5px;line-height:12.5px;color:#f0f0f0;">G</div>
<div class="r" style="left:543px;top:233px;width:1px;height:19px;background:#8a8a8a;"></div>
<div class="t" style="left:570.49px;top:238.22px;font-size:12.5px;line-height:12.5px;color:#f0f0f0;">H</div>
<div class="r" style="left:607px;top:233px;width:1px;height:19px;background:#8a8a8a;"></div>
<div class="t" style="left:637.26px;top:238.22px;font-size:12.5px;line-height:12.5px;color:#f0f0f0;">I</div>
<div class="r" style="left:671px;top:233px;width:1px;height:19px;background:#8a8a8a;"></div>
<div class="t" style="left:699.88px;top:238.22px;font-size:12.5px;line-height:12.5px;color:#f0f0f0;">J</div>
<div class="r" style="left:735px;top:233px;width:1px;height:19px;background:#8a8a8a;"></div>
<div class="t" style="left:762.83px;top:238.22px;font-size:12.5px;line-height:12.5px;color:#f0f0f0;">K</div>
<div class="r" style="left:799px;top:233px;width:1px;height:19px;background:#8a8a8a;"></div>
<div class="t" style="left:827.52px;top:238.22px;font-size:12.5px;line-height:12.5px;color:#f0f0f0;">L</div>
<div class="r" style="left:863px;top:233px;width:1px;height:19px;background:#8a8a8a;"></div>
<div class="t" style="left:889.79px;top:238.22px;font-size:12.5px;line-height:12.5px;color:#f0f0f0;">M</div>
<div class="r" style="left:927px;top:233px;width:1px;height:19px;background:#8a8a8a;"></div>
<div class="t" style="left:954.49px;top:238.22px;font-size:12.5px;line-height:12.5px;color:#f0f0f0;">N</div>
<div class="r" style="left:991px;top:233px;width:1px;height:19px;background:#8a8a8a;"></div>
<div class="t" style="left:1018.14px;top:238.22px;font-size:12.5px;line-height:12.5px;color:#f0f0f0;">O</div>
<div class="r" style="left:1055px;top:233px;width:1px;height:19px;background:#8a8a8a;"></div>
<div class="r" style="left:70px;top:252px;width:1000px;height:1px;background:#9a9a9a;"></div>
<div class="r" style="left:96px;top:253px;width:973px;height:395px;background:#ffffff;"></div>
<div class="r" style="left:159px;top:253px;width:1px;height:387px;background:#e1e1e1;"></div>
<div class="r" style="left:223px;top:253px;width:1px;height:387px;background:#e1e1e1;"></div>
<div class="r" style="left:287px;top:253px;width:1px;height:387px;background:#e1e1e1;"></div>
<div class="r" style="left:351px;top:253px;width:1px;height:387px;background:#e1e1e1;"></div>
<div class="r" style="left:415px;top:253px;width:1px;height:387px;background:#e1e1e1;"></div>
<div class="r" style="left:479px;top:253px;width:1px;height:387px;background:#e1e1e1;"></div>
<div class="r" style="left:543px;top:253px;width:1px;height:387px;background:#e1e1e1;"></div>
<div class="r" style="left:607px;top:253px;width:1px;height:387px;background:#e1e1e1;"></div>
<div class="r" style="left:671px;top:253px;width:1px;height:387px;background:#e1e1e1;"></div>
<div class="r" style="left:735px;top:253px;width:1px;height:387px;background:#e1e1e1;"></div>
<div class="r" style="left:799px;top:253px;width:1px;height:387px;background:#e1e1e1;"></div>
<div class="r" style="left:863px;top:253px;width:1px;height:387px;background:#e1e1e1;"></div>
<div class="r" style="left:927px;top:253px;width:1px;height:387px;background:#e1e1e1;"></div>
<div class="r" style="left:991px;top:253px;width:1px;height:387px;background:#e1e1e1;"></div>
<div class="r" style="left:1055px;top:253px;width:1px;height:387px;background:#e1e1e1;"></div>
<div class="r" style="left:96px;top:272px;width:973px;height:1px;background:#e1e1e1;"></div>
<div class="r" style="left:96px;top:292px;width:973px;height:1px;background:#e1e1e1;"></div>
<div class="r" style="left:96px;top:312px;width:973px;height:1px;background:#e1e1e1;"></div>
<div class="r" style="left:96px;top:332px;width:973px;height:1px;background:#e1e1e1;"></div>
<div class="r" style="left:96px;top:352px;width:973px;height:1px;background:#e1e1e1;"></div>
<div class="r" style="left:96px;top:372px;width:973px;height:1px;background:#e1e1e1;"></div>
<div class="r" style="left:96px;top:392px;width:973px;height:1px;background:#e1e1e1;"></div>
<div class="r" style="left:96px;top:412px;width:973px;height:1px;background:#e1e1e1;"></div>
<div class="r" style="left:96px;top:432px;width:973px;height:1px;background:#e1e1e1;"></div>
<div class="r" style="left:96px;top:452px;width:973px;height:1px;background:#e1e1e1;"></div>
<div class="r" style="left:96px;top:472px;width:973px;height:1px;background:#e1e1e1;"></div>
<div class="r" style="left:96px;top:492px;width:973px;height:1px;background:#e1e1e1;"></div>
<div class="r" style="left:96px;top:512px;width:973px;height:1px;background:#e1e1e1;"></div>
<div class="r" style="left:96px;top:532px;width:973px;height:1px;background:#e1e1e1;"></div>
<div class="r" style="left:96px;top:552px;width:973px;height:1px;background:#e1e1e1;"></div>
<div class="r" style="left:96px;top:572px;width:973px;height:1px;background:#e1e1e1;"></div>
<div class="r" style="left:96px;top:592px;width:973px;height:1px;background:#e1e1e1;"></div>
<div class="r" style="left:96px;top:612px;width:973px;height:1px;background:#e1e1e1;"></div>
<div class="r" style="left:96px;top:632px;width:973px;height:1px;background:#e1e1e1;"></div>
<div class="r" style="left:70px;top:253px;width:25px;height:387px;background:#2e2e2e;"></div>
<div class="r" style="left:95px;top:253px;width:1px;height:387px;background:#9a9a9a;"></div>
<div class="r" style="left:70px;top:272px;width:25px;height:1px;background:#8a8a8a;"></div>
<div class="t" style="left:79.16px;top:257.84px;font-size:12px;line-height:12px;color:#f0f0f0;">1</div>
<div class="r" style="left:70px;top:292px;width:25px;height:1px;background:#8a8a8a;"></div>
<div class="t" style="left:79.16px;top:277.84px;font-size:12px;line-height:12px;color:#f0f0f0;">2</div>
<div class="r" style="left:70px;top:312px;width:25px;height:1px;background:#8a8a8a;"></div>
<div class="t" style="left:79.16px;top:297.84px;font-size:12px;line-height:12px;color:#f0f0f0;">3</div>
<div class="r" style="left:70px;top:332px;width:25px;height:1px;background:#8a8a8a;"></div>
<div class="t" style="left:79.16px;top:317.84px;font-size:12px;line-height:12px;color:#f0f0f0;">4</div>
<div class="r" style="left:70px;top:352px;width:25px;height:1px;background:#8a8a8a;"></div>
<div class="t" style="left:79.16px;top:337.84px;font-size:12px;line-height:12px;color:#f0f0f0;">5</div>
<div class="r" style="left:70px;top:372px;width:25px;height:1px;background:#8a8a8a;"></div>
<div class="t" style="left:79.16px;top:357.84px;font-size:12px;line-height:12px;color:#f0f0f0;">6</div>
<div class="r" style="left:70px;top:392px;width:25px;height:1px;background:#8a8a8a;"></div>
<div class="t" style="left:79.16px;top:377.84px;font-size:12px;line-height:12px;color:#f0f0f0;">7</div>
<div class="r" style="left:70px;top:412px;width:25px;height:1px;background:#8a8a8a;"></div>
<div class="t" style="left:79.16px;top:397.84px;font-size:12px;line-height:12px;color:#f0f0f0;">8</div>
<div class="r" style="left:70px;top:432px;width:25px;height:1px;background:#8a8a8a;"></div>
<div class="t" style="left:79.16px;top:417.84px;font-size:12px;line-height:12px;color:#f0f0f0;">9</div>
<div class="r" style="left:70px;top:452px;width:25px;height:1px;background:#8a8a8a;"></div>
<div class="t" style="left:75.83px;top:437.84px;font-size:12px;line-height:12px;color:#f0f0f0;">10</div>
<div class="r" style="left:70px;top:472px;width:25px;height:1px;background:#8a8a8a;"></div>
<div class="t" style="left:76.27px;top:457.84px;font-size:12px;line-height:12px;color:#f0f0f0;">11</div>
<div class="r" style="left:70px;top:492px;width:25px;height:1px;background:#8a8a8a;"></div>
<div class="t" style="left:75.83px;top:477.84px;font-size:12px;line-height:12px;color:#f0f0f0;">12</div>
<div class="r" style="left:70px;top:512px;width:25px;height:1px;background:#8a8a8a;"></div>
<div class="t" style="left:75.83px;top:497.84px;font-size:12px;line-height:12px;color:#f0f0f0;">13</div>
<div class="r" style="left:70px;top:532px;width:25px;height:1px;background:#8a8a8a;"></div>
<div class="t" style="left:75.83px;top:517.84px;font-size:12px;line-height:12px;color:#f0f0f0;">14</div>
<div class="r" style="left:70px;top:552px;width:25px;height:1px;background:#8a8a8a;"></div>
<div class="t" style="left:75.83px;top:537.84px;font-size:12px;line-height:12px;color:#f0f0f0;">15</div>
<div class="r" style="left:70px;top:572px;width:25px;height:1px;background:#8a8a8a;"></div>
<div class="t" style="left:75.83px;top:557.84px;font-size:12px;line-height:12px;color:#f0f0f0;">16</div>
<div class="r" style="left:70px;top:592px;width:25px;height:1px;background:#8a8a8a;"></div>
<div class="t" style="left:75.83px;top:577.84px;font-size:12px;line-height:12px;color:#f0f0f0;">17</div>
<div class="r" style="left:70px;top:612px;width:25px;height:1px;background:#8a8a8a;"></div>
<div class="t" style="left:75.83px;top:597.84px;font-size:12px;line-height:12px;color:#f0f0f0;">18</div>
<div class="r" style="left:70px;top:632px;width:25px;height:1px;background:#8a8a8a;"></div>
<div class="t" style="left:75.83px;top:617.84px;font-size:12px;line-height:12px;color:#f0f0f0;">19</div>
<div class="t" style="left:75.83px;top:637.84px;font-size:12px;line-height:12px;color:#f0f0f0;">20</div>
<div class="r" style="left:1072px;top:234px;width:16px;height:408px;border-radius:8px;background:#383838;"></div>
<svg class="s" style="left:1076px;top:238px;" width="10" height="7" viewBox="0 0 10 7"><path d="M0 7 L5 0 L10 7 Z" fill="#bfbfbf"/></svg>
<div class="r" style="left:1076px;top:250px;width:9px;height:356px;border-radius:5px;background:#c4c4c4;"></div>
<svg class="s" style="left:1076px;top:631px;" width="10" height="7" viewBox="0 0 10 7"><path d="M0 0 L10 0 L5 7 Z" fill="#bfbfbf"/></svg>
<div class="r" style="left:70px;top:640px;width:116px;height:32px;background:#2e2e2e;border-radius:8px 6px 0 0;"></div>
<div class="r" style="left:242px;top:640px;width:828px;height:32px;background:#2e2e2e;border-radius:6px 0 0 0;"></div>
<div class="r" style="left:186px;top:668px;width:56px;height:4px;background:#2e2e2e;"></div>
<div class="r" style="left:1069px;top:640px;width:22px;height:32px;background:#2e2e2e;"></div>
<div class="r" style="left:186px;top:636px;width:56px;height:32px;border-radius:0 0 6px 6px;background:#ffffff;"></div>
<div class="t" style="left:194.30px;top:647.42px;font-size:12.5px;line-height:12.5px;color:#262626;font-weight:700;transform:scaleX(0.9774);-webkit-text-stroke:0;">Sayfa1</div>
<div class="r" style="left:194px;top:662.5px;width:40px;height:2px;background:#3d7a4f;"></div>
<div class="r" style="left:246px;top:648px;width:1px;height:16px;background:#8a8a8a;"></div>
<svg class="s" style="left:97px;top:650px;" width="9" height="11" viewBox="0 0 9 11"><path d="M7 1 L2 5.5 L7 10" fill="none" stroke="#9a9a9a" stroke-width="1.1"/></svg>
<svg class="s" style="left:130px;top:650px;" width="9" height="11" viewBox="0 0 9 11"><path d="M2 1 L7 5.5 L2 10" fill="none" stroke="#9a9a9a" stroke-width="1.1"/></svg>
<svg class="s" style="left:288px;top:649px;" width="13" height="13" viewBox="0 0 13 13"><path d="M6.5 0.5 V12.5 M0.5 6.5 H12.5" stroke="#d8d8d8" stroke-width="1.2"/></svg>
<div class="r" style="left:684px;top:652px;width:2px;height:2px;background:#f0f0f0;"></div>
<div class="r" style="left:684px;top:656.5px;width:2px;height:2px;background:#f0f0f0;"></div>
<div class="r" style="left:684px;top:661px;width:2px;height:2px;background:#f0f0f0;"></div>
<div class="r" style="left:698px;top:646px;width:373px;height:18px;border-radius:9px;background:#3a3a3a;"></div>
<svg class="s" style="left:705px;top:651px;" width="8" height="10" viewBox="0 0 8 10"><path d="M8 0 V10 L0 5 Z" fill="#bfbfbf"/></svg>
<div class="r" style="left:990px;top:651px;width:42px;height:9px;border-radius:5px;background:#c4c4c4;"></div>
<svg class="s" style="left:1060px;top:651px;" width="8" height="10" viewBox="0 0 8 10"><path d="M0 0 V10 L8 5 Z" fill="#bfbfbf"/></svg>
<div class="r" style="left:70px;top:671px;width:1021px;height:22px;border-radius:0 0 8px 8px;background:#393939;"></div>
<div class="t" style="left:81.60px;top:678.87px;font-size:11.5px;line-height:11.5px;color:#f0f0f0;transform:scaleX(0.9244);">Hazır</div>
<svg class="s" style="left:126px;top:676px;" width="16" height="15" viewBox="0 0 16 15"><rect x="0.5" y="0.5" width="13" height="11" fill="none" stroke="#e0e0e0" stroke-width="1"/><path d="M0.5 3.5 H13.5 M3 6 H7 M3 8.5 H6" stroke="#e0e0e0" stroke-width="1"/><circle cx="11" cy="10.5" r="3.5" fill="#393939" stroke="#e0e0e0" stroke-width="1"/><circle cx="11" cy="10.5" r="1.2" fill="#e0e0e0"/></svg>
<svg class="s" style="left:158px;top:675px;" width="16" height="17" viewBox="0 0 16 17"><circle cx="7" cy="3" r="2" fill="none" stroke="#e0e0e0" stroke-width="1"/><path d="M1 6 Q7 9 13 6 M7 8 V12 L4 16 M7 12 L9 14" fill="none" stroke="#e0e0e0" stroke-width="1"/><path d="M8.5 13 L10.5 15 L15 10" fill="none" stroke="#e0e0e0" stroke-width="1.1"/></svg>
<div class="t" style="left:177.00px;top:678.27px;font-size:11.5px;line-height:11.5px;color:#f0f0f0;transform:scaleX(0.9864);">Erişilebilirlik: Her şey hazır</div>
<div class="r" style="left:1011px;top:683px;width:8px;height:1px;background:#e0e0e0;"></div>
<svg class="s" style="left:1024px;top:679px;" width="9" height="9" viewBox="0 0 9 9"><path d="M4.5 0 V9 M0 4.5 H9" stroke="#ececec" stroke-width="1"/></svg>
<div class="t" style="left:1044.70px;top:677.57px;font-size:11.5px;line-height:11.5px;color:#f0f0f0;transform:scaleX(0.9248);">%100</div>
<div class="r" style="left:717px;top:359px;width:294px;height:457px;border-radius:8px;overflow:hidden;background:#dbdbdb;box-shadow:0 0 0 1px rgba(0,0,0,0.06);"><div class="r" style="left:0;top:0;width:294px;height:30px;background:#f9f9f9;"></div><div class="r" style="left:0;top:30px;width:294px;height:327px;background:#f6f6f6;"></div><div class="r" style="left:0;top:281px;width:294px;height:76px;background:linear-gradient(180deg,#f2f2f2 0%,#e0e0e0 60%,#dcdcdc 100%);"></div></div>
<div class="t" style="left:732.70px;top:372.44px;font-size:12px;line-height:12px;color:#5a5a5a;-webkit-text-stroke:0;">Son kullanılanlar</div>
<div class="r" style="left:717px;top:389px;width:294px;height:327px;overflow:hidden;"><div class="r" style="left:0;top:-30px;width:294px;height:357px;"><div class="r" style="left:-10px;top:28px;width:300px;height:40px;background:#d9d9d9;filter:blur(5px);"></div><div class="r" style="left:10px;top:40px;width:24px;height:320px;background:#dde9e1;filter:blur(5px);"></div><div class="r" style="left:-8px;top:20px;width:12px;height:340px;background:#c4c4c4;filter:blur(5px);"></div><div class="r" style="left:13px;top:42px;width:18px;height:18px;border-radius:50%;background:#b9d6c3;filter:blur(4px);"></div><div class="r" style="left:51px;top:45px;width:167px;height:12px;background:#c6c6c6;filter:blur(5px);"></div><div class="r" style="left:13px;top:73px;width:18px;height:18px;border-radius:50%;background:#b9d6c3;filter:blur(4px);"></div><div class="r" style="left:49px;top:76px;width:69px;height:12px;background:#cdcdcd;filter:blur(5px);"></div><div class="r" style="left:118px;top:76px;width:37px;height:12px;background:#e0e0e0;filter:blur(5px);"></div><div class="r" style="left:155px;top:76px;width:108px;height:12px;background:#cdcdcd;filter:blur(5px);"></div><div class="r" style="left:13px;top:105px;width:18px;height:18px;border-radius:50%;background:#b9d6c3;filter:blur(4px);"></div><div class="r" style="left:49px;top:108px;width:90px;height:12px;background:#cdcdcd;filter:blur(5px);"></div><div class="r" style="left:13px;top:137px;width:18px;height:18px;border-radius:50%;background:#b9d6c3;filter:blur(4px);"></div><div class="r" style="left:51px;top:140px;width:132px;height:12px;background:#cdcdcd;filter:blur(5px);"></div><div class="r" style="left:13px;top:169px;width:18px;height:18px;border-radius:50%;background:#b9d6c3;filter:blur(4px);"></div><div class="r" style="left:48px;top:172px;width:68px;height:12px;background:#cdcdcd;filter:blur(5px);"></div><div class="r" style="left:116px;top:172px;width:37px;height:12px;background:#e2e2e2;filter:blur(5px);"></div><div class="r" style="left:153px;top:172px;width:115px;height:12px;background:#cdcdcd;filter:blur(5px);"></div><div class="r" style="left:13px;top:201px;width:18px;height:18px;border-radius:50%;background:#b9d6c3;filter:blur(4px);"></div><div class="r" style="left:48px;top:204px;width:218px;height:12px;background:#cdcdcd;filter:blur(5px);"></div><div class="r" style="left:13px;top:233px;width:18px;height:18px;border-radius:50%;background:#b9d6c3;filter:blur(4px);"></div><div class="r" style="left:48px;top:236px;width:69px;height:12px;background:#cdcdcd;filter:blur(5px);"></div><div class="r" style="left:13px;top:265px;width:18px;height:18px;border-radius:50%;background:#b9d6c3;filter:blur(4px);"></div><div class="r" style="left:48px;top:268px;width:153px;height:12px;background:#cdcdcd;filter:blur(5px);"></div><div class="r" style="left:201px;top:268px;width:19px;height:12px;background:#dedede;filter:blur(5px);"></div><div class="r" style="left:220px;top:268px;width:48px;height:12px;background:#cdcdcd;filter:blur(5px);"></div><div class="r" style="left:13px;top:297px;width:18px;height:18px;border-radius:50%;background:#b9d6c3;filter:blur(4px);"></div><div class="r" style="left:48px;top:300px;width:220px;height:12px;background:#c2c2c2;filter:blur(5px);"></div><div class="r" style="left:13px;top:329px;width:18px;height:18px;border-radius:50%;background:#b9d6c3;filter:blur(4px);"></div><div class="r" style="left:48px;top:332px;width:220px;height:12px;background:#c2c2c2;filter:blur(5px);"></div><div class="r" style="left:223px;top:44px;width:34px;height:14px;border-radius:7px;background:#f4f4f4;filter:blur(4px);"></div><div class="r" style="left:284px;top:282px;width:8px;height:80px;background:#9a9a9a;filter:blur(3px);"></div></div></div>
<svg class="s" style="left:733px;top:726px;" width="17" height="17" viewBox="0 0 17 17">
<rect x="3.6" y="0.2" width="12.6" height="16.5" rx="1.2" fill="#21a366"/>
<path d="M3.6 1.4 Q3.6 0.2 4.8 0.2 H15 Q16.2 0.2 16.2 1.4 V5.6 H3.6 Z" fill="#33c481"/>
<path d="M3.6 11.1 H16.2 V15.5 Q16.2 16.7 15 16.7 H4.8 Q3.6 16.7 3.6 15.5 Z" fill="#185c37"/>
<rect x="3.6" y="5.6" width="12.6" height="5.5" fill="#21a366"/>
<rect x="0" y="3.8" width="10.6" height="10.6" rx="1" fill="#107c41"/>
<path d="M3 6.5 L7.6 11.7 M7.6 6.5 L3 11.7" stroke="#fff" stroke-width="1.6"/>
</svg>
<div class="t" style="left:761.20px;top:727.77px;font-size:13.5px;line-height:13.5px;color:#1f1f1f;transform:scaleX(0.8997);-webkit-text-stroke:0;">Excel</div>
<svg class="s" style="left:733px;top:757px;" width="17" height="18" viewBox="0 0 17 18"><path d="M9.4 1.2 L15.6 7.5 Q12.5 8.6 10.2 10.4 Q9 12.5 8.4 15.1 L1.2 8.4 Q4 7.5 6.3 6.3 Q8.2 4 9.4 1.2 Z" fill="none" stroke="#222" stroke-width="1.05" stroke-linejoin="round"/><path d="M4.4 12.2 L0.4 16.6" stroke="#222" stroke-width="1.05"/></svg>
<div class="t" style="left:761.20px;top:759.17px;font-size:13.5px;line-height:13.5px;color:#1f1f1f;transform:scaleX(1.0225);-webkit-text-stroke:0;">Görev çubuğuna sabitle</div>
<div class="r" style="left:721px;top:784px;width:286px;height:28px;border-radius:5px;background:#d5d5d5;"></div>
<svg class="s" style="left:734px;top:792px;" width="13" height="12" viewBox="0 0 13 12"><path d="M1 0.5 L12 11.5 M12 0.5 L1 11.5" stroke="#2a2a2a" stroke-width="1.05"/></svg>
<div class="t" style="left:761.20px;top:790.97px;font-size:13.5px;line-height:13.5px;color:#1f1f1f;-webkit-text-stroke:0;">Pencereyi kapat</div>
<svg class="s" style="left:877px;top:802px;" width="12" height="19" viewBox="0 0 12 19"><path d="M0.5 0.5 V15 L4 11.5 L6.5 17.5 L9 16.5 L6.5 10.5 L11 10.5 Z" fill="#fff" stroke="#000" stroke-width="1"/></svg>
<div class="r" style="left:0px;top:829px;width:1150px;height:48px;background:linear-gradient(90deg,#dcdcdc 0%,#e3e3e3 18%,#eaeaea 40%,#ebebeb 58%,#e3e3e3 75%,#dadada 100%);"></div>
<div class="r" style="left:0px;top:829px;width:1150px;height:1px;background:rgba(255,255,255,0.35);"></div>
<svg class="s" style="left:281px;top:841px;" width="24" height="24" viewBox="0 0 24 24"><defs><linearGradient id="wl" x1="0" y1="0" x2="1" y2="1"><stop offset="0" stop-color="#4fc3f7"/><stop offset="1" stop-color="#0b6fd6"/></linearGradient></defs><rect x="0" y="0" width="11.3" height="11.3" rx="1" fill="url(#wl)"/><rect x="12.7" y="0" width="11.3" height="11.3" rx="1" fill="url(#wl)"/><rect x="0" y="12.7" width="11.3" height="11.3" rx="1" fill="url(#wl)"/><rect x="12.7" y="12.7" width="11.3" height="11.3" rx="1" fill="url(#wl)"/></svg>
<svg class="s" style="left:326px;top:841px;" width="23" height="24" viewBox="0 0 23 24"><circle cx="9.5" cy="9.5" r="7.5" fill="none" stroke="#1a1a1a" stroke-width="2.4"/><path d="M15 15 L21.5 21.5" stroke="#1a1a1a" stroke-width="2.8" stroke-linecap="round"/></svg>
<svg class="s" style="left:368px;top:842px;" width="26" height="22" viewBox="0 0 26 22"><path d="M1 2 Q1 0.5 2.5 0.5 H9 L11.5 3 H23.5 Q25 3 25 4.5 V20 Q25 21.5 23.5 21.5 H2.5 Q1 21.5 1 20 Z" fill="#f2b82b"/><path d="M1 6 H25 V20 Q25 21.5 23.5 21.5 H2.5 Q1 21.5 1 20 Z" fill="#ffd35c"/><rect x="7" y="14" width="12" height="6" rx="1" fill="#1d7fd6"/></svg>
<div class="r" style="left:377.5px;top:869px;width:7px;height:2.5px;background:#7a7a7a;border-radius:2px;"></div>
<svg class="s" style="left:413px;top:841px;" width="23" height="24" viewBox="0 0 23 24"><path d="M7 6 Q7 1 11.5 1 Q16 1 16 6" fill="none" stroke="#3aa0e8" stroke-width="1.6"/><rect x="0.5" y="5" width="22" height="18" rx="2.5" fill="#1f5fb0"/><rect x="6" y="9.5" width="5" height="5" fill="#f25022"/><rect x="12" y="9.5" width="5" height="5" fill="#7fba00"/><rect x="6" y="15.5" width="5" height="5" fill="#00a4ef"/><rect x="12" y="15.5" width="5" height="5" fill="#ffb900"/></svg>
<svg class="s" style="left:457px;top:841px;" width="24" height="24" viewBox="0 0 24 24"><rect x="0" y="0" width="24" height="24" rx="3" fill="#0e1f5b"/><circle cx="12" cy="12" r="9" fill="#fff"/><path d="M5 12 L9 9 V11 H15 V9 L19 12 L15 15 V13 H9 V15 Z" fill="#0e1f5b"/></svg>
<svg class="s" style="left:501px;top:841px;" width="24" height="24" viewBox="0 0 24 24"><rect x="0" y="0" width="24" height="24" fill="#ef443b"/><path d="M5 12 L10 7 L15 12 L10 17 Z" fill="#fff"/><path d="M13 7 L18 12 L13 17" fill="none" stroke="#fff" stroke-width="2"/></svg>
<svg class="s" style="left:545px;top:841px;" width="24" height="24" viewBox="0 0 24 24"><circle cx="12" cy="12" r="11" fill="#1ba1e2"/><circle cx="7" cy="7" r="6" fill="#1ba1e2"/><circle cx="17" cy="17" r="6" fill="#1ba1e2"/></svg>
<div class="t" style="left:551.00px;top:846.61px;font-size:17px;line-height:17px;color:#ffffff;font-weight:700;transform:scaleX(1.0582);">S</div>
<div class="r" style="left:553px;top:869px;width:7px;height:2.5px;background:#7a7a7a;border-radius:2px;"></div>
<svg class="s" style="left:589px;top:841px;" width="24" height="24" viewBox="0 0 24 24"><path d="M3 22.5 L4.5 17.5 Q1.5 12 4 7 Q7.5 1 13 1.2 Q19.5 1.8 22 7.5 Q24 13.5 20 18.5 Q15 23.5 8 21 Z" fill="#fff" stroke="#25a162" stroke-width="2.2"/><path d="M8.5 7 Q7 8.5 8 11 Q10 15 14.5 16.5 Q16.5 17 17.5 15 L15.5 13.5 L14 14.5 Q11.5 13.5 10 11 L11 9.5 L10 7 Z" fill="#25a162"/></svg>
<div class="r" style="left:597px;top:869px;width:7px;height:2.5px;background:#7a7a7a;border-radius:2px;"></div>
<svg class="s" style="left:632px;top:841px;" width="25" height="25" viewBox="0 0 25 25"><circle cx="12.5" cy="12.5" r="12" fill="#db4437"/><path d="M12.5 12.5 L2.1 6.5 A12 12 0 0 0 12.5 24.5 Z" fill="#0f9d58"/><path d="M12.5 12.5 L12.5 24.5 A12 12 0 0 0 22.9 6.5 Z" fill="#ffcd40"/><circle cx="12.5" cy="12.5" r="5.5" fill="#fff"/><circle cx="12.5" cy="12.5" r="4.3" fill="#4285f4"/></svg>
<div class="r" style="left:641px;top:869px;width:7px;height:2.5px;background:#7a7a7a;border-radius:2px;"></div>
<svg class="s" style="left:678px;top:842px;" width="22" height="21" viewBox="0 0 22 21"><rect x="0" y="0" width="22" height="21" rx="3" fill="#001e36"/></svg>
<div class="t" style="left:681.00px;top:848.27px;font-size:11.5px;line-height:11.5px;color:#31a8ff;font-weight:700;transform:scaleX(1.0663);">Ps</div>
<div class="r" style="left:685px;top:869px;width:7px;height:2.5px;background:#7a7a7a;border-radius:2px;"></div>
<svg class="s" style="left:722px;top:842px;" width="22" height="21" viewBox="0 0 22 21"><rect x="0" y="0" width="22" height="21" rx="3" fill="#330000"/></svg>
<div class="t" style="left:725.50px;top:848.27px;font-size:11.5px;line-height:11.5px;color:#ff9a00;font-weight:700;transform:scaleX(1.2174);">Ai</div>
<svg class="s" style="left:766px;top:842px;" width="22" height="21" viewBox="0 0 22 21"><rect x="0" y="0" width="22" height="21" rx="3" fill="#00005b"/></svg>
<div class="t" style="left:768.50px;top:848.27px;font-size:11.5px;line-height:11.5px;color:#9999ff;font-weight:700;transform:scaleX(1.0884);">Ae</div>
<svg class="s" style="left:808px;top:841px;" width="25" height="23" viewBox="0 0 25 23"><rect x="0" y="0" width="25" height="23" rx="2" fill="#4aa832"/><path d="M19 5 H9 L6 11.5 L9 18 H19" fill="none" stroke="#d8f2c8" stroke-width="3.2"/></svg>
<div class="r" style="left:846px;top:835px;width:37px;height:37px;border-radius:4px;background:#f7f7f7;box-shadow:0 0 0 1px #e4e4e4;"></div>
<svg class="s" style="left:852px;top:841px;" width="26" height="22" viewBox="0 0 26 22"><rect x="7" y="0.5" width="18.5" height="21" rx="1.5" fill="#21a366"/><rect x="7" y="0.5" width="18.5" height="7" rx="1.5" fill="#33c481"/><rect x="7" y="14.5" width="18.5" height="7" rx="1.5" fill="#107c41"/><rect x="7" y="7.5" width="18.5" height="7" fill="#21a366"/><rect x="0.5" y="5" width="13" height="13" rx="1.5" fill="#107c41"/><path d="M4 8 L10 15 M10 8 L4 15" stroke="#fff" stroke-width="2"/></svg>
<div class="r" style="left:856px;top:868.5px;width:17px;height:3px;background:#0067c0;border-radius:2px;"></div>
</body></html>
